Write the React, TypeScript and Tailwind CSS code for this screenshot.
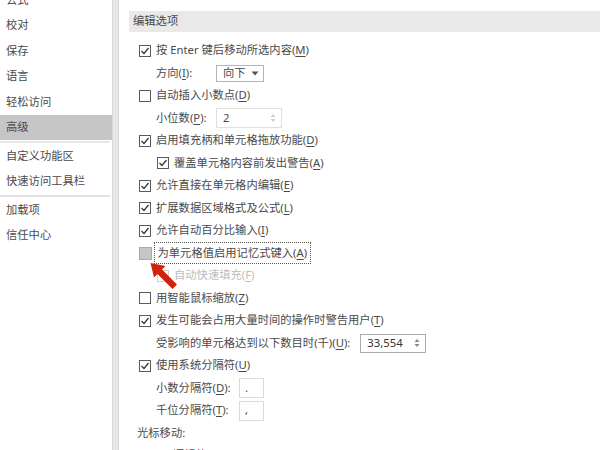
import React from 'react';

type BoxState = 'on' | 'off' | 'gray' | 'disabled';

const CheckBox = ({ state }: { state: BoxState }) => {
  const tone =
    state === 'gray'
      ? 'bg-[#c6c6c6] border-[#a9a9a9] w-[13px] h-[13px]'
      : state === 'disabled'
        ? 'bg-white border-[#d2d2d2] w-[12px] h-[12px]'
        : 'bg-white border-[#5a5a5a] w-[12px] h-[12px]';
  return (
    <span className={`shrink-0 border flex items-center justify-center ${tone}`}>
      {state === 'on' && (
        <svg width="10" height="10" viewBox="0 0 10 10">
          <polyline points="1.5,5 4,7.5 8.5,2" fill="none" stroke="#333" strokeWidth="1.2" />
        </svg>
      )}
    </span>
  );
};

const Key = ({ k }: { k: string }) => <span className="underline underline-offset-2">{k}</span>;

const Spinner = ({ light }: { light?: boolean }) => (
  <svg width="6" height="10" viewBox="0 0 6 10" className="ml-auto">
    <path d="M3 1 L5.5 4 L0.5 4 Z" fill={light ? '#cfcfcf' : '#8a8a8a'} />
    <path d="M3 9 L5.5 6 L0.5 6 Z" fill={light ? '#cfcfcf' : '#8a8a8a'} />
  </svg>
);

const CheckRow = ({ state, indent, children, dim, focus }: { state: BoxState; indent?: boolean; children: React.ReactNode; dim?: boolean; focus?: boolean }) => (
  <div className={`h-[22.5px] flex items-center ${indent ? 'pl-[28px]' : 'pl-[10px]'}`}>
    <CheckBox state={state} />
    {focus ? (
      <span className="ml-[1.5px] h-[22px] px-[3px] flex items-center border border-dotted border-[#555]">{children}</span>
    ) : (
      <span className={`ml-[5px] ${dim ? 'text-[#bdbdbd]' : ''}`}>{children}</span>
    )}
  </div>
);

const sideItems = ['公式', '校对', '保存', '语言', '轻松访问', '高级'];

export default function App() {
  return (
    <div className="relative flex w-[600px] h-[450px] overflow-hidden bg-white text-[#4a4a4a] text-[11.3px] font-['Noto_Sans','Noto_Sans_CJK_SC',sans-serif]">
      <aside className="w-[112px] shrink-0 mt-[-13px] flex flex-col">
        {sideItems.map((s) => (
          <div key={s} className={`h-[25.5px] flex items-center pl-[6px] pt-[1px] ${s === '高级' ? 'bg-[#c6c6c6]' : ''}`}>
            {s}
          </div>
        ))}
        <div className="h-[3px] flex items-center"><div className="h-[2px] w-[110px] bg-[#e6e6e6]" /></div>
        <div className="h-[25.5px] flex items-center pl-[6px] pt-[1px]">自定义功能区</div>
        <div className="h-[25.5px] flex items-center pl-[6px] pt-[1px]">快速访问工具栏</div>
        <div className="h-[3px] flex items-center"><div className="h-[2px] w-[110px] bg-[#e2e2e2]" /></div>
        <div className="h-[25.5px] flex items-center pl-[6px] pt-[1px]">加载项</div>
        <div className="h-[25.5px] flex items-center pl-[6px] pt-[1px]">信任中心</div>
      </aside>
      <div className="w-[7px] shrink-0 bg-[#e6e6e6] border-x border-[#d8d8d8]" />
      <main className="flex-1 pl-[10px] pt-[11px]">
        <div className="h-[21px] bg-[#e9e9e9] pl-[4px] flex items-center">编辑选项</div>
        <div className="mt-[7.5px] flex flex-col">
          <CheckRow state="on">按 Enter 键后移动所选内容(<Key k="M" />)</CheckRow>
          <div className="h-[22.5px] flex items-center pl-[27px]">
            <span className="w-[60px]">方向(<Key k="I" />):</span>
            <div className="w-[48px] h-[17px] border border-[#b5b5b5] flex items-center pl-[6px] pr-[4px]">
              <span>向下</span>
              <svg width="8" height="5" viewBox="0 0 8 5" className="ml-auto"><path d="M0.5 0.5 L7.5 0.5 L4 4.5 Z" fill="#555" /></svg>
            </div>
          </div>
          <CheckRow state="off">自动插入小数点(<Key k="D" />)</CheckRow>
          <div className="h-[22.5px] flex items-center pl-[27px]">
            <span className="w-[60px]">小位数(<Key k="P" />):</span>
            <div className="w-[66px] h-[20px] border border-[#e0e0e0] flex items-center pl-[6px] pr-[5px]">
              <span>2</span>
              <Spinner light />
            </div>
          </div>
          <CheckRow state="on">启用填充柄和单元格拖放功能(<Key k="D" />)</CheckRow>
          <CheckRow state="on" indent>覆盖单元格内容前发出警告(<Key k="A" />)</CheckRow>
          <CheckRow state="on">允许直接在单元格内编辑(<Key k="E" />)</CheckRow>
          <CheckRow state="on">扩展数据区域格式及公式(<Key k="L" />)</CheckRow>
          <CheckRow state="on">允许自动百分比输入(<Key k="I" />)</CheckRow>
          <CheckRow state="gray" focus>为单元格值启用记忆式键入(<Key k="A" />)</CheckRow>
          <CheckRow state="disabled" indent dim>自动快速填充(<Key k="F" />)</CheckRow>
          <CheckRow state="off">用智能鼠标缩放(<Key k="Z" />)</CheckRow>
          <CheckRow state="on">发生可能会占用大量时间的操作时警告用户(<Key k="T" />)</CheckRow>
          <div className="h-[22.5px] flex items-center pl-[27px]">
            <span className="mr-[10px]">受影响的单元格达到以下数目时(千)(<Key k="U" />):</span>
            <div className="w-[66px] h-[19px] border border-[#ababab] flex items-center pl-[6px] pr-[5px]">
              <span className="text-[#333]">33,554</span>
              <Spinner />
            </div>
          </div>
          <CheckRow state="on">使用系统分隔符(<Key k="U" />)</CheckRow>
          <div className="h-[22.5px] flex items-center pl-[27px]">
            <span className="w-[83px]">小数分隔符(<Key k="D" />):</span>
            <div className="w-[25px] h-[20px] border border-[#dadada] flex items-center pl-[5px]">.</div>
          </div>
          <div className="h-[22.5px] flex items-center pl-[27px]">
            <span className="w-[83px]">千位分隔符(<Key k="T" />):</span>
            <div className="w-[25px] h-[20px] border border-[#dadada] flex items-center pl-[5px]">,</div>
          </div>
          <div className="h-[22.5px] flex items-center pl-[8px]">光标移动:</div>
          <div className="h-[22.5px] flex items-center pl-[27px]">
            <span className="w-[12px] h-[12px] rounded-full border border-[#666] mr-[5px]" />
            <span>逻辑的</span>
          </div>
        </div>
      </main>
      <svg className="absolute left-0 top-0 pointer-events-none" width="600" height="450" viewBox="0 0 600 450">
        <path d="M150.5 263 L165.5 266 L162 269.5 L177 284.5 L172.5 289 L157.5 274 L154 277.5 Z" fill="#d2230f" />
      </svg>
    </div>
  );
}
